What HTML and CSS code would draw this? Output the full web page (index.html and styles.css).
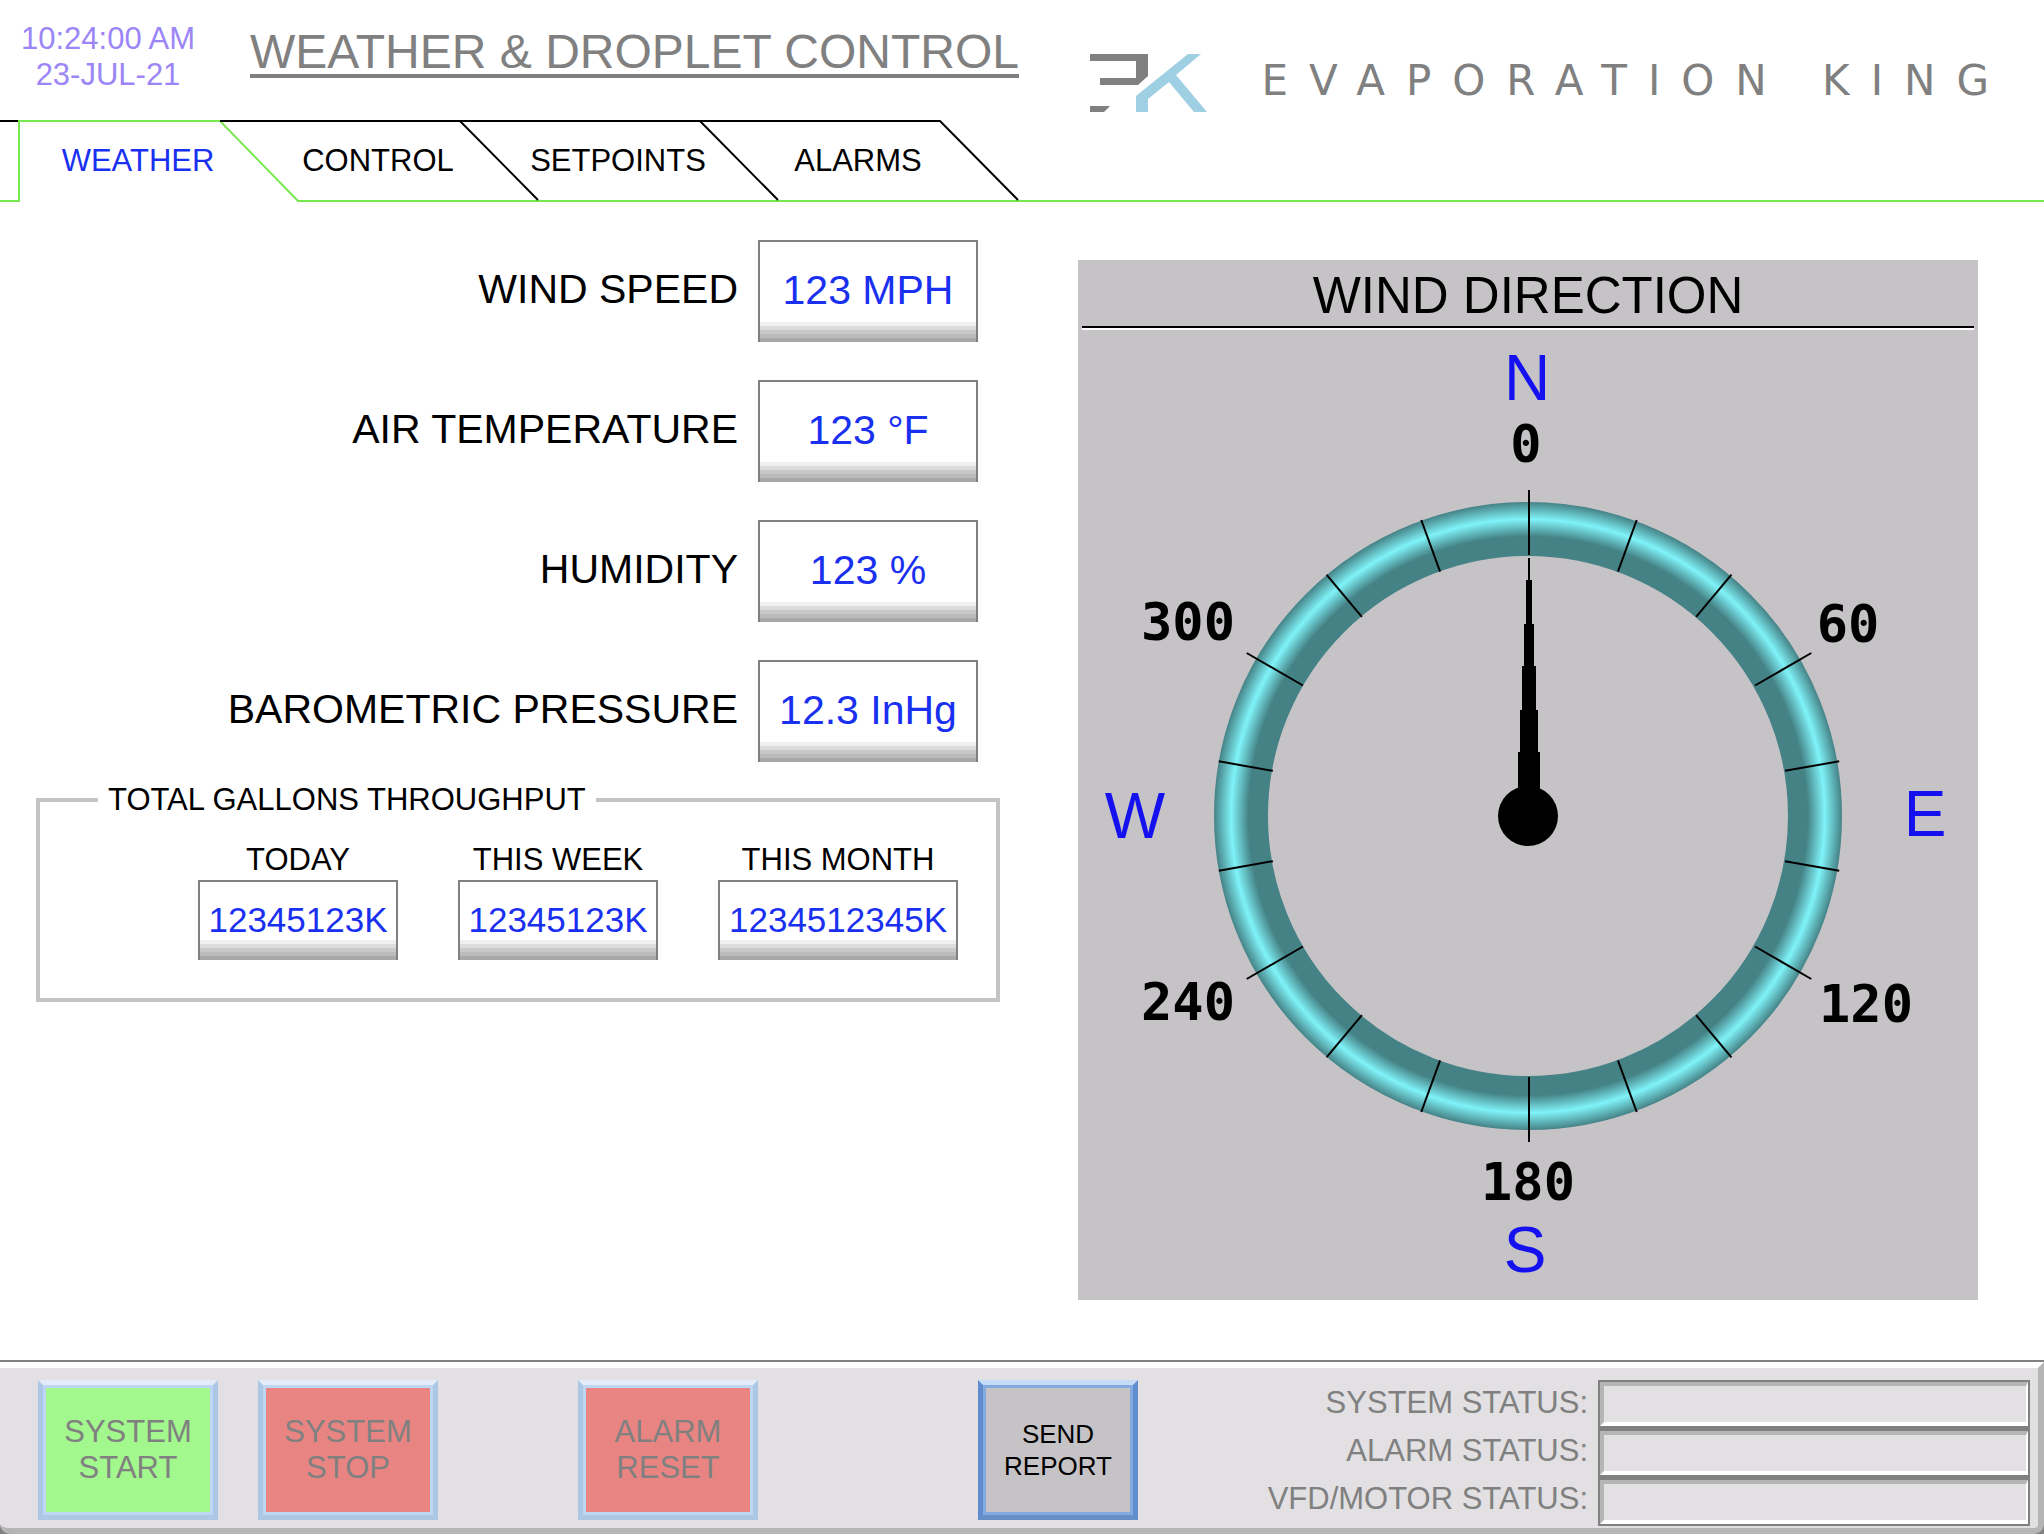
FILE: index.html
```
<!DOCTYPE html>
<html lang="en">
<head>
    <meta charset="UTF-8" />
    <meta name="viewport" content="width=device-width, initial-scale=1" />
    <title>Weather &amp; Droplet Control</title>
    <link rel="stylesheet" href="styles.css">
</head>
<body>
<header class="header">
    <div class="clock">10:24:00 AM<br>23-JUL-21</div>
    <h1>WEATHER &amp; DROPLET CONTROL</h1>
    <div class="brand">
        <svg class="brand-mark" width="118" height="58" viewBox="0 0 118 58" aria-hidden="true">
            <path fill="#808080" d="M0 0H58V22L48 31H10V24H46V7H0ZM0 52H20L14 58H0Z" />
            <path fill="#9fcfe3" d="M98 0H111L86 21L117 58H104L79 28L58 45V58H46V42Z" />
        </svg>
        <span class="brand-name">EVAPORATION KING</span>
    </div>
</header>

<nav class="tabs">
    <a class="tab active" href="#weather">
        <svg class="tab-edge" width="280" height="82" aria-hidden="true">
            <path class="edge-gap" d="M2 81H279" />
            <path class="edge-black" d="M-18 1H0" />
            <path class="edge-green" d="M1 82V1H202L280 81" />
        </svg>
        <span>WEATHER</span>
    </a>
    <a class="tab" href="#control">
        <svg class="tab-edge" width="280" height="82" aria-hidden="true">
            <path class="edge-black" d="M-38 1H202L280 80" />
        </svg>
        <span>CONTROL</span>
    </a>
    <a class="tab" href="#setpoints">
        <svg class="tab-edge" width="280" height="82" aria-hidden="true">
            <path class="edge-black" d="M-38 1H202L280 80" />
        </svg>
        <span>SETPOINTS</span>
    </a>
    <a class="tab" href="#alarms">
        <svg class="tab-edge" width="280" height="82" aria-hidden="true">
            <path class="edge-black" d="M-38 1H202L280 80" />
        </svg>
        <span>ALARMS</span>
    </a>
</nav>

<main class="main">
    <section class="left">
        <div class="readings">
            <div class="reading">
                <label for="wind">WIND SPEED</label>
                <output id="wind" class="value">123 MPH</output>
            </div>
            <div class="reading">
                <label for="temp">AIR TEMPERATURE</label>
                <output id="temp" class="value">123 °F</output>
            </div>
            <div class="reading">
                <label for="humidity">HUMIDITY</label>
                <output id="humidity" class="value">123 %</output>
            </div>
            <div class="reading">
                <label for="pressure">BAROMETRIC PRESSURE</label>
                <output id="pressure" class="value">12.3 InHg</output>
            </div>
        </div>

        <fieldset class="totals">
            <legend>TOTAL GALLONS THROUGHPUT</legend>
            <div class="totals-row">
                <div class="total">
                    <label for="today">TODAY</label>
                    <output id="today" class="value small">12345123K</output>
                </div>
                <div class="total">
                    <label for="week">THIS WEEK</label>
                    <output id="week" class="value small">12345123K</output>
                </div>
                <div class="total">
                    <label for="month">THIS MONTH</label>
                    <output id="month" class="value small wide">1234512345K</output>
                </div>
            </div>
        </fieldset>
    </section>

    <section class="wind-panel">
        <h2>WIND DIRECTION</h2>
        <svg class="compass" viewBox="0 0 900 970">
            <defs>
                <radialGradient id="ring" gradientUnits="userSpaceOnUse" cx="450" cy="486" r="314">
                    <stop offset="0.89" stop-color="#458286" />
                    <stop offset="0.945" stop-color="#7ff3f8" />
                    <stop offset="1" stop-color="#458286" />
                </radialGradient>
            </defs>
            <circle cx="450" cy="486" r="287" fill="none" stroke="url(#ring)" stroke-width="54" />

            <!-- long marks every 60 degrees, short ones every 20 -->
            <g class="marks" transform="translate(451 486)">
                <path id="long" d="M0 -326V-261" />
                <path id="short" d="M0 -315V-260" transform="rotate(20)" />
                <use href="#long" transform="rotate(60)" />
                <use href="#long" transform="rotate(120)" />
                <use href="#long" transform="rotate(180)" />
                <use href="#long" transform="rotate(240)" />
                <use href="#long" transform="rotate(300)" />
                <use href="#short" transform="rotate(20)" />
                <use href="#short" transform="rotate(60)" />
                <use href="#short" transform="rotate(80)" />
                <use href="#short" transform="rotate(120)" />
                <use href="#short" transform="rotate(140)" />
                <use href="#short" transform="rotate(180)" />
                <use href="#short" transform="rotate(200)" />
                <use href="#short" transform="rotate(240)" />
                <use href="#short" transform="rotate(260)" />
                <use href="#short" transform="rotate(300)" />
                <use href="#short" transform="rotate(320)" />
            </g>

            <!-- needle -->
            <path d="M450 228H452V250H454V294H456V336H458V380H460V422H462V470H440V422H442V380H444V336H446V294H448V250H450Z" />
            <circle cx="450" cy="486" r="30" />

            <g class="point">
                <text x="449" y="70">N</text>
                <text x="847" y="506">E</text>
                <text x="447" y="942">S</text>
                <text x="57" y="508">W</text>
            </g>
            <g class="degree">
                <text x="448" y="132">0</text>
                <text x="770" y="312">60</text>
                <text x="788" y="692">120</text>
                <text x="450" y="870">180</text>
                <text x="110" y="690">240</text>
                <text x="110" y="310">300</text>
            </g>
        </svg>
    </section>
</main>

<footer class="footer">
    <div class="footer-body">
        <button class="btn start" type="button" disabled>SYSTEM<br>START</button>
        <button class="btn stop" type="button" disabled>SYSTEM<br>STOP</button>
        <button class="btn reset" type="button" disabled>ALARM<br>RESET</button>
        <button class="btn send" type="button">SEND<br>REPORT</button>
        <div class="status">
            <div class="status-labels">
                <label for="system_status">SYSTEM STATUS:</label>
                <label for="alarm_status">ALARM STATUS:</label>
                <label for="vfd_status">VFD/MOTOR STATUS:</label>
            </div>
            <div class="status-fields">
                <input type="text" id="system_status" readonly />
                <input type="text" id="alarm_status" readonly />
                <input type="text" id="vfd_status" readonly />
            </div>
        </div>
    </div>
</footer>
</body>
</html>
```
FILE: styles.css
```
* {
    box-sizing: border-box;
}
body {
    margin: 0;
    min-height: 100vh;
    display: flex;
    flex-direction: column;
    font-family: "Liberation Sans", Arial, sans-serif;
    font-size: 31px;
    line-height: 36px;
    color: #000;
    background-color: #fff;
}

/* header */
.header {
    display: flex;
    align-items: flex-start;
    height: 120px;
    padding-right: 34px;
}
.clock {
    width: 216px;
    padding-top: 21px;
    text-align: center;
    color: #9c86f7;
}
h1 {
    margin: 30px 0 0 34px;
    font-size: 48px;
    font-weight: normal;
    line-height: 44px;
    white-space: nowrap;
    color: #808080;
    border-bottom: 4px solid #808080;
}
.brand {
    display: flex;
    margin: 54px 0 0 auto;
    gap: 54px;
}
.brand-name {
    font-family: "DejaVu Sans", sans-serif;
    font-size: 42px;
    line-height: 54px;
    letter-spacing: 21px;
    white-space: nowrap;
    color: #808080;
}

/* tabs */
.tabs {
    display: flex;
    padding-left: 18px;
    border-bottom: 2px solid #77e84d;
}
.tab {
    position: relative;
    width: 240px;
    height: 80px;
    line-height: 82px;
    text-align: center;
    text-decoration: none;
    color: #000;
}
.tab.active {
    color: #1a30f0;
}
.tab-edge {
    position: absolute;
    top: 0;
    left: 0;
    overflow: visible;
    fill: none;
    stroke-width: 2;
    pointer-events: none;
}
.edge-green {
    stroke: #77e84d;
}
.edge-black {
    stroke: #000;
}
.edge-gap {
    stroke: #fff;
}

/* main area */
.main {
    flex: 1;
    display: grid;
    grid-template-columns: 964fr 900fr;
    gap: 78px;
    align-items: start;
    padding: 38px 66px 60px 36px;
}
.readings {
    display: flex;
    flex-direction: column;
    gap: 38px;
    padding-right: 22px;
}
.reading {
    display: flex;
    align-items: center;
    justify-content: flex-end;
    gap: 20px;
    font-size: 41px;
}
.reading label {
    padding-bottom: 4px;
}
.value {
    width: 220px;
    height: 102px;
    padding-bottom: 4px;
    line-height: 96px;
    text-align: center;
    white-space: nowrap;
    color: #1a30f0;
    border: 2px solid #808080;
    border-bottom: none;
    background: linear-gradient(#f0f0f0 4px, #dcdcdc 4px 8px, #c9c9c9 8px 12px, #bbb 12px 16px, #a8a8a8 16px) bottom / 100% 20px no-repeat;
}
.value.small {
    width: 200px;
    height: 80px;
    font-size: 35px;
    line-height: 76px;
}
.value.wide {
    width: 240px;
}
.totals {
    margin: 20px 0 0;
    padding: 24px 38px 38px 58px;
    border: 4px solid #c5c3c6;
}
.totals legend {
    padding: 0 10px;
}
.totals-row {
    display: flex;
    justify-content: flex-end;
    gap: 60px;
}
.total {
    display: flex;
    flex-direction: column;
    gap: 2px;
    text-align: center;
}

/* wind direction */
.wind-panel {
    margin-top: 20px;
    background-color: #c5c3c6;
}
.wind-panel h2 {
    margin: 0 4px;
    padding-top: 6px;
    font-size: 51px;
    font-weight: normal;
    line-height: 60px;
    text-align: center;
    border-bottom: 2px solid #000;
    box-shadow: 0 2px #fff;
}
.compass {
    display: block;
    width: 100%;
    margin-top: 2px;
}
.marks {
    stroke: #000;
    stroke-width: 2;
}
.point {
    font-size: 64px;
    text-anchor: middle;
    fill: #1410f0;
}
.degree {
    font-family: "DejaVu Sans Mono", monospace;
    font-size: 52px;
    font-weight: bold;
    text-anchor: middle;
}

/* bottom bar */
.footer {
    background-color: #808080;
    border-top: 2px solid #808080;
}
.footer-body {
    display: flex;
    align-items: flex-start;
    padding: 12px 8px 2px 38px;
    background-color: #e2e0e3;
    border-top: 6px solid #fff;
    border-right: 6px solid #b5b5b5;
    border-bottom: 6px solid #b5b5b5;
    border-radius: 0 0 10px 10px;
}
.btn {
    width: 180px;
    height: 140px;
    padding: 0;
    font: inherit;
    color: #808080;
    border: 5px solid #aec6e6;
    border-top-color: #e3ebf9;
    border-bottom-color: #afc6e5;
    box-shadow: inset 0 0 0 3px #bfd6f2;
}
.start {
    background-color: #a2f78d;
}
.stop, .reset {
    background-color: #e88582;
}
.stop {
    margin-left: 40px;
}
.reset {
    margin-left: 140px;
}
.send {
    width: 160px;
    margin-left: 220px;
    font-size: 26px;
    line-height: 32px;
    color: #000;
    background-color: #c5c3c6;
    border-color: #c6dbf7 #5f8dcf #668fc6;
    box-shadow: inset 0 0 0 3px #82aade;
    cursor: pointer;
}
.status {
    display: flex;
    gap: 10px;
    margin-left: auto;
}
.status-labels {
    display: flex;
    flex-direction: column;
    gap: 12px;
    padding-top: 5px;
    text-align: right;
    color: #808080;
}
.status-fields {
    display: flex;
    flex-direction: column;
    gap: 5px;
    width: 432px;
    background-color: #808080;
    border: 2px solid #808080;
}
.status-fields input {
    height: 44px;
    padding: 0 8px;
    font: inherit;
    background-color: #e2e0e3;
    border: 4px solid #b5b5b5;
    border-right: 2px solid #fff;
    border-bottom-color: #fff;
}
```
